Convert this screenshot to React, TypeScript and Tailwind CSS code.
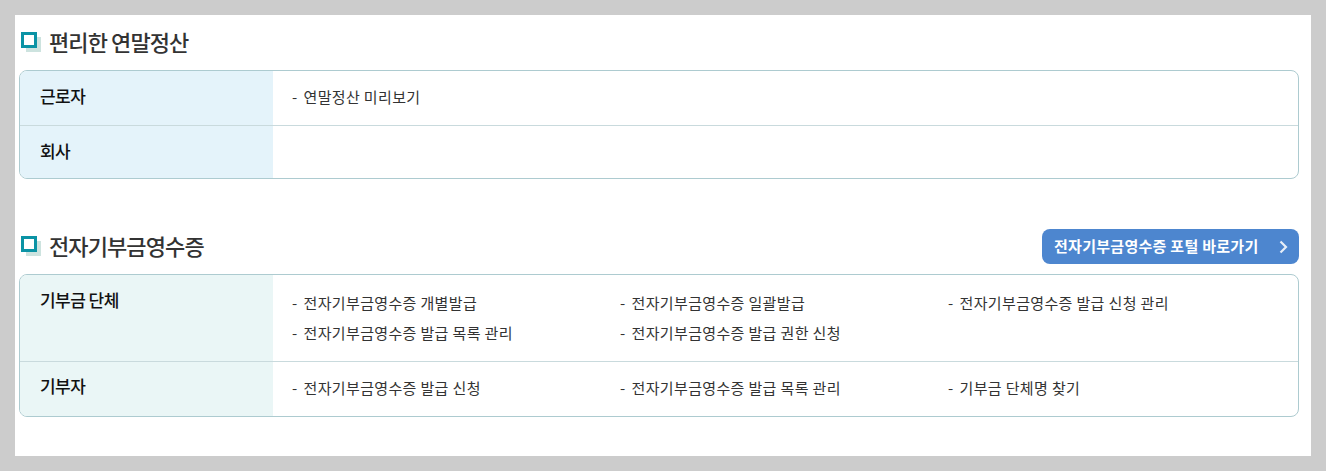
const font = "font-['Noto_Sans_CJK_KR','Noto_Sans',sans-serif]";

function Bullet({ top }: { top: string }) {
  return (
    <span className={`relative block h-[20px] w-[21px] shrink-0 ${top}`}>
      <span className="absolute left-[5px] top-[5px] h-[15px] w-[15px] bg-[#cde3df]" />
      <span className="absolute left-0 top-0 h-[16px] w-[16px] border-[3px] border-[#0b93a5] bg-white" />
    </span>
  );
}

function Heading({ children, top }: { children: string; top: string }) {
  return (
    <div className="flex items-start gap-[7px]">
      <Bullet top={top} />
      <h2 className="text-[22px] font-medium leading-[30px] tracking-[-0.9px] text-[#333]">{children}</h2>
    </div>
  );
}

function Item({ children }: { children: string }) {
  return (
    <div className="h-[30px] text-[15px] leading-[30px] tracking-[0.35px] text-[#333]">
      <span className="mr-[6px]">-</span>
      {children}
    </div>
  );
}

function Row({
  label,
  bg,
  items,
  rowClass,
  labelClass,
  listClass,
}: {
  label: string;
  bg: string;
  items: string[];
  rowClass: string;
  labelClass: string;
  listClass: string;
}) {
  return (
    <div className={`flex ${rowClass}`}>
      <div className={`w-[253px] shrink-0 pl-[20px] text-[17px] font-medium leading-[26px] tracking-[-0.55px] text-[#111] ${bg} ${labelClass}`}>
        {label}
      </div>
      <div className={`grid flex-1 grid-cols-[328px_328px_1fr] pl-[19px] ${listClass}`}>
        {items.map((t) => (
          <Item key={t}>{t}</Item>
        ))}
      </div>
    </div>
  );
}

export default function App() {
  return (
    <div className={`h-[471px] w-[1326px] overflow-hidden bg-[#cccccc] p-[15px] ${font}`}>
      <div className="h-[441px] w-[1296px] bg-white pl-[4px] pr-[12px]">
        <div className="h-[55px] pl-[2px] pt-[11px]">
          <Heading top="mt-[6px]">편리한 연말정산</Heading>
        </div>
        <div className="overflow-hidden rounded-[8px] border border-[#adcbd0]">
          <Row
            label="근로자"
            bg="bg-[#e4f3fa]"
            items={["연말정산 미리보기"]}
            rowClass="h-[55px] border-b border-[#c9dadd]"
            labelClass="pt-[12px]"
            listClass="pt-[11px]"
          />
          <Row label="회사" bg="bg-[#e4f3fa]" items={[]} rowClass="h-[52px]" labelClass="pt-[12px]" listClass="" />
        </div>
        <div className="flex h-[95px] items-end justify-between pb-[10px] pl-[2px]">
          <div className="mb-[4px]">
            <Heading top="mt-[6px]">전자기부금영수증</Heading>
          </div>
          <a className="flex h-[35px] w-[257px] items-center justify-between rounded-[8px] bg-[#4d86cf] pl-[12px] pr-[11px] text-[15px] font-bold tracking-[0.28px] text-white">
            <span>전자기부금영수증 포털 바로가기</span>
            <svg width="9" height="14" viewBox="0 0 9 14" fill="none" stroke="#e6eef8" strokeWidth="2.2">
              <path d="M1.500 1.500 7 7l-5.500 5.500" />
            </svg>
          </a>
        </div>
        <div className="overflow-hidden rounded-[8px] border border-[#adcbd0]">
          <Row
            label="기부금 단체"
            bg="bg-[#eaf6f6]"
            items={[
              "전자기부금영수증 개별발급",
              "전자기부금영수증 일괄발급",
              "전자기부금영수증 발급 신청 관리",
              "전자기부금영수증 발급 목록 관리",
              "전자기부금영수증 발급 권한 신청",
            ]}
            rowClass="h-[87px] border-b border-[#c9dadd]"
            labelClass="pt-[12px]"
            listClass="content-start pt-[13px]"
          />
          <Row
            label="기부자"
            bg="bg-[#eaf6f6]"
            items={["전자기부금영수증 발급 신청", "전자기부금영수증 발급 목록 관리", "기부금 단체명 찾기"]}
            rowClass="h-[54px]"
            labelClass="pt-[11px]"
            listClass="content-start pt-[11px]"
          />
        </div>
      </div>
    </div>
  );
}
